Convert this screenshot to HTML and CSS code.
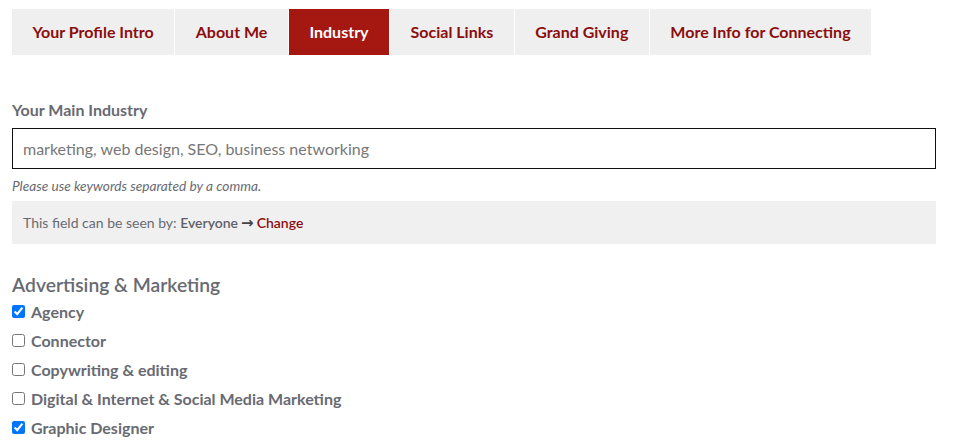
FILE: index.html
```html
<!DOCTYPE html>
<html>
<head>
<meta charset="utf-8">
<link rel="stylesheet" href="styles.css">
</head>
<body>
<div class="page">
  <nav class="tabs">
    <a class="tab">Your Profile Intro</a>
    <a class="tab">About Me</a>
    <a class="tab active">Industry</a>
    <a class="tab">Social Links</a>
    <a class="tab">Grand Giving</a>
    <a class="tab">More Info for Connecting</a>
  </nav>

  <div class="field">
    <label class="field-label">Your Main Industry</label>
    <div class="input">marketing, web design, SEO, business networking</div>
    <p class="help">Please use keywords separated by a comma.</p>
    <div class="visibility">This field can be seen by: <strong>Everyone</strong><span class="arrow">&#8594;</span><a class="change">Change</a></div>
  </div>

  <h3 class="group-title">Advertising &amp; Marketing</h3>
  <ul class="checks">
    <li><input type="checkbox" checked><span>Agency</span></li>
    <li><input type="checkbox"><span>Connector</span></li>
    <li><input type="checkbox"><span>Copywriting &amp; editing</span></li>
    <li><input type="checkbox"><span>Digital &amp; Internet &amp; Social Media Marketing</span></li>
    <li><input type="checkbox" checked><span>Graphic Designer</span></li>
  </ul>
</div>
</body>
</html>
```

FILE: styles.css
```css
* { box-sizing: border-box; }
html, body { margin: 0; padding: 0; background: #fff; }
body { font-family: Lato, "Open Sans", sans-serif; color: #686a72; }
.page { padding: 9px 17px 0 12px; }

.tabs { display: flex; gap: 1px; }
.tab {
  display: flex; align-items: center;
  height: 46px;
  padding: 0 20.5px 2px;
  background: #efefef;
  color: #8b0d0d;
  font-size: 16px; font-weight: 700;
  text-decoration: none;
}
.tab.active { background: #a51711; color: #fff; }

.field { margin-top: 45px; }
.field-label { display: block; font-size: 16px; font-weight: 700; color: #686a72; line-height: 20px; }
.input {
  margin-top: 8px;
  height: 41px;
  border: 1px solid #111;
  padding: 0 10px;
  display: flex; align-items: center;
  font-size: 16px; color: #777;
}
.help { margin: 8px 0 0; font-size: 13.7px; font-style: italic; color: #686a72; line-height: 18px; }
.visibility {
  margin-top: 6px;
  background: #f0f0f0;
  height: 43px;
  padding: 0 11px;
  line-height: 43px;
  font-size: 14px; color: #686a72;
}
.visibility strong { font-weight: 600; color: #5f6168; }
.arrow { color: #444; font-family: "DejaVu Sans", sans-serif; font-size: 15px; font-weight: 700; margin: 0 3px; }
.change { color: #8b0d0d; font-weight: 600; }

.group-title { margin: 29px 0 0; font-size: 19.3px; font-weight: 600; color: #686a72; line-height: 24px; }
.checks { list-style: none; margin: 0; padding: 0; }
.checks li { display: flex; align-items: center; height: 29px; font-size: 16px; font-weight: 700; color: #686a72; }
.checks input { margin: 0 6px 0 0; width: 13px; height: 13px; }
```
